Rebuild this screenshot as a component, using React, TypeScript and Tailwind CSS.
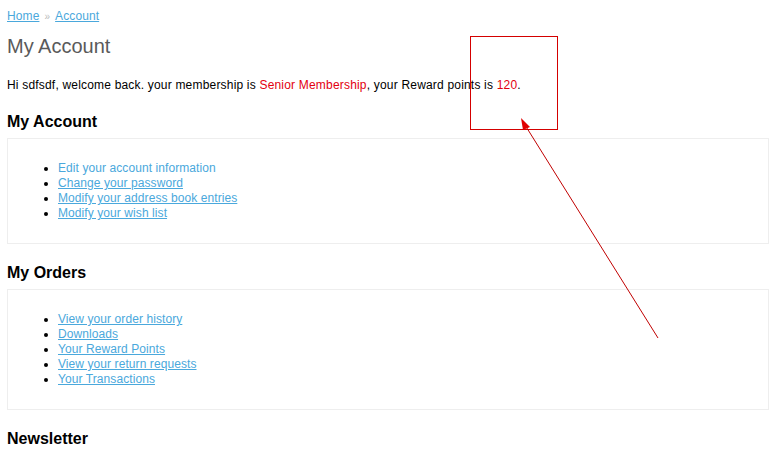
import React from 'react'

const accountLinks = [
  { label: 'Edit your account information', underline: false },
  { label: 'Change your password', underline: true },
  { label: 'Modify your address book entries', underline: true },
  { label: 'Modify your wish list', underline: true },
]

const orderLinks = [
  'View your order history',
  'Downloads',
  'Your Reward Points',
  'View your return requests',
  'Your Transactions',
]

function Section({ title, children }: { title: string; children: React.ReactNode }) {
  return (
    <>
      <h2 className="text-[16px] font-bold leading-[18px] text-black mb-[7px]">{title}</h2>
      <div className="border border-[#eeeeee] p-[10px] mb-[20px]">
        <ul className="list-disc pl-[40px] my-[12px] text-[12px] leading-[15px] tracking-[0.08px]">
          {children}
        </ul>
      </div>
    </>
  )
}

export default function App() {
  return (
    <div
      className="relative w-[770px] h-[453px] overflow-hidden bg-white text-black"
      style={{ fontFamily: '"Liberation Sans", Arial, sans-serif' }}
    >
      <div className="pl-[7px] pr-[1px] pt-[8px]">
        {/* breadcrumb */}
        <div className="text-[12px] leading-[16px] tracking-[0.1px]">
          <a className="text-[#4aa8dc] underline">Home</a>
          <span className="text-[#bbbbbb] mx-[5px] text-[10px]">»</span>
          <a className="text-[#4aa8dc] underline">Account</a>
        </div>

        <h1 className="text-[20px] leading-[24px] text-[#5a5a5a] mt-[9px]">My Account</h1>

        <p className="text-[12px] leading-[15px] mt-[20px] mb-[20px] tracking-[0.19px]">
          Hi sdfsdf, welcome back. your membership is{' '}
          <span className="text-[#e3000f]">Senior Membership</span>, your Reward points is{' '}
          <span className="text-[#e3000f]">120</span>.
        </p>

        <Section title="My Account">
          {accountLinks.map((l) => (
            <li key={l.label}>
              <a className={l.underline ? 'text-[#4aa8dc] underline' : 'text-[#4aa8dc]'}>{l.label}</a>
            </li>
          ))}
        </Section>

        <Section title="My Orders">
          {orderLinks.map((l) => (
            <li key={l}>
              <a className="text-[#4aa8dc] underline">{l}</a>
            </li>
          ))}
        </Section>

        <h2 className="text-[16px] font-bold leading-[18px] text-black">Newsletter</h2>
      </div>

      {/* red annotation over the page */}
      <svg className="absolute left-0 top-0 pointer-events-none" width="770" height="453">
        <rect x="470.5" y="36.5" width="87" height="93" fill="none" stroke="#d40000" strokeWidth="1" />
        <line x1="658" y1="338" x2="525" y2="125" stroke="#c00000" strokeWidth="1" />
        <polygon points="521,118 530,127 523,130" fill="#e00000" />
      </svg>
    </div>
  )
}
